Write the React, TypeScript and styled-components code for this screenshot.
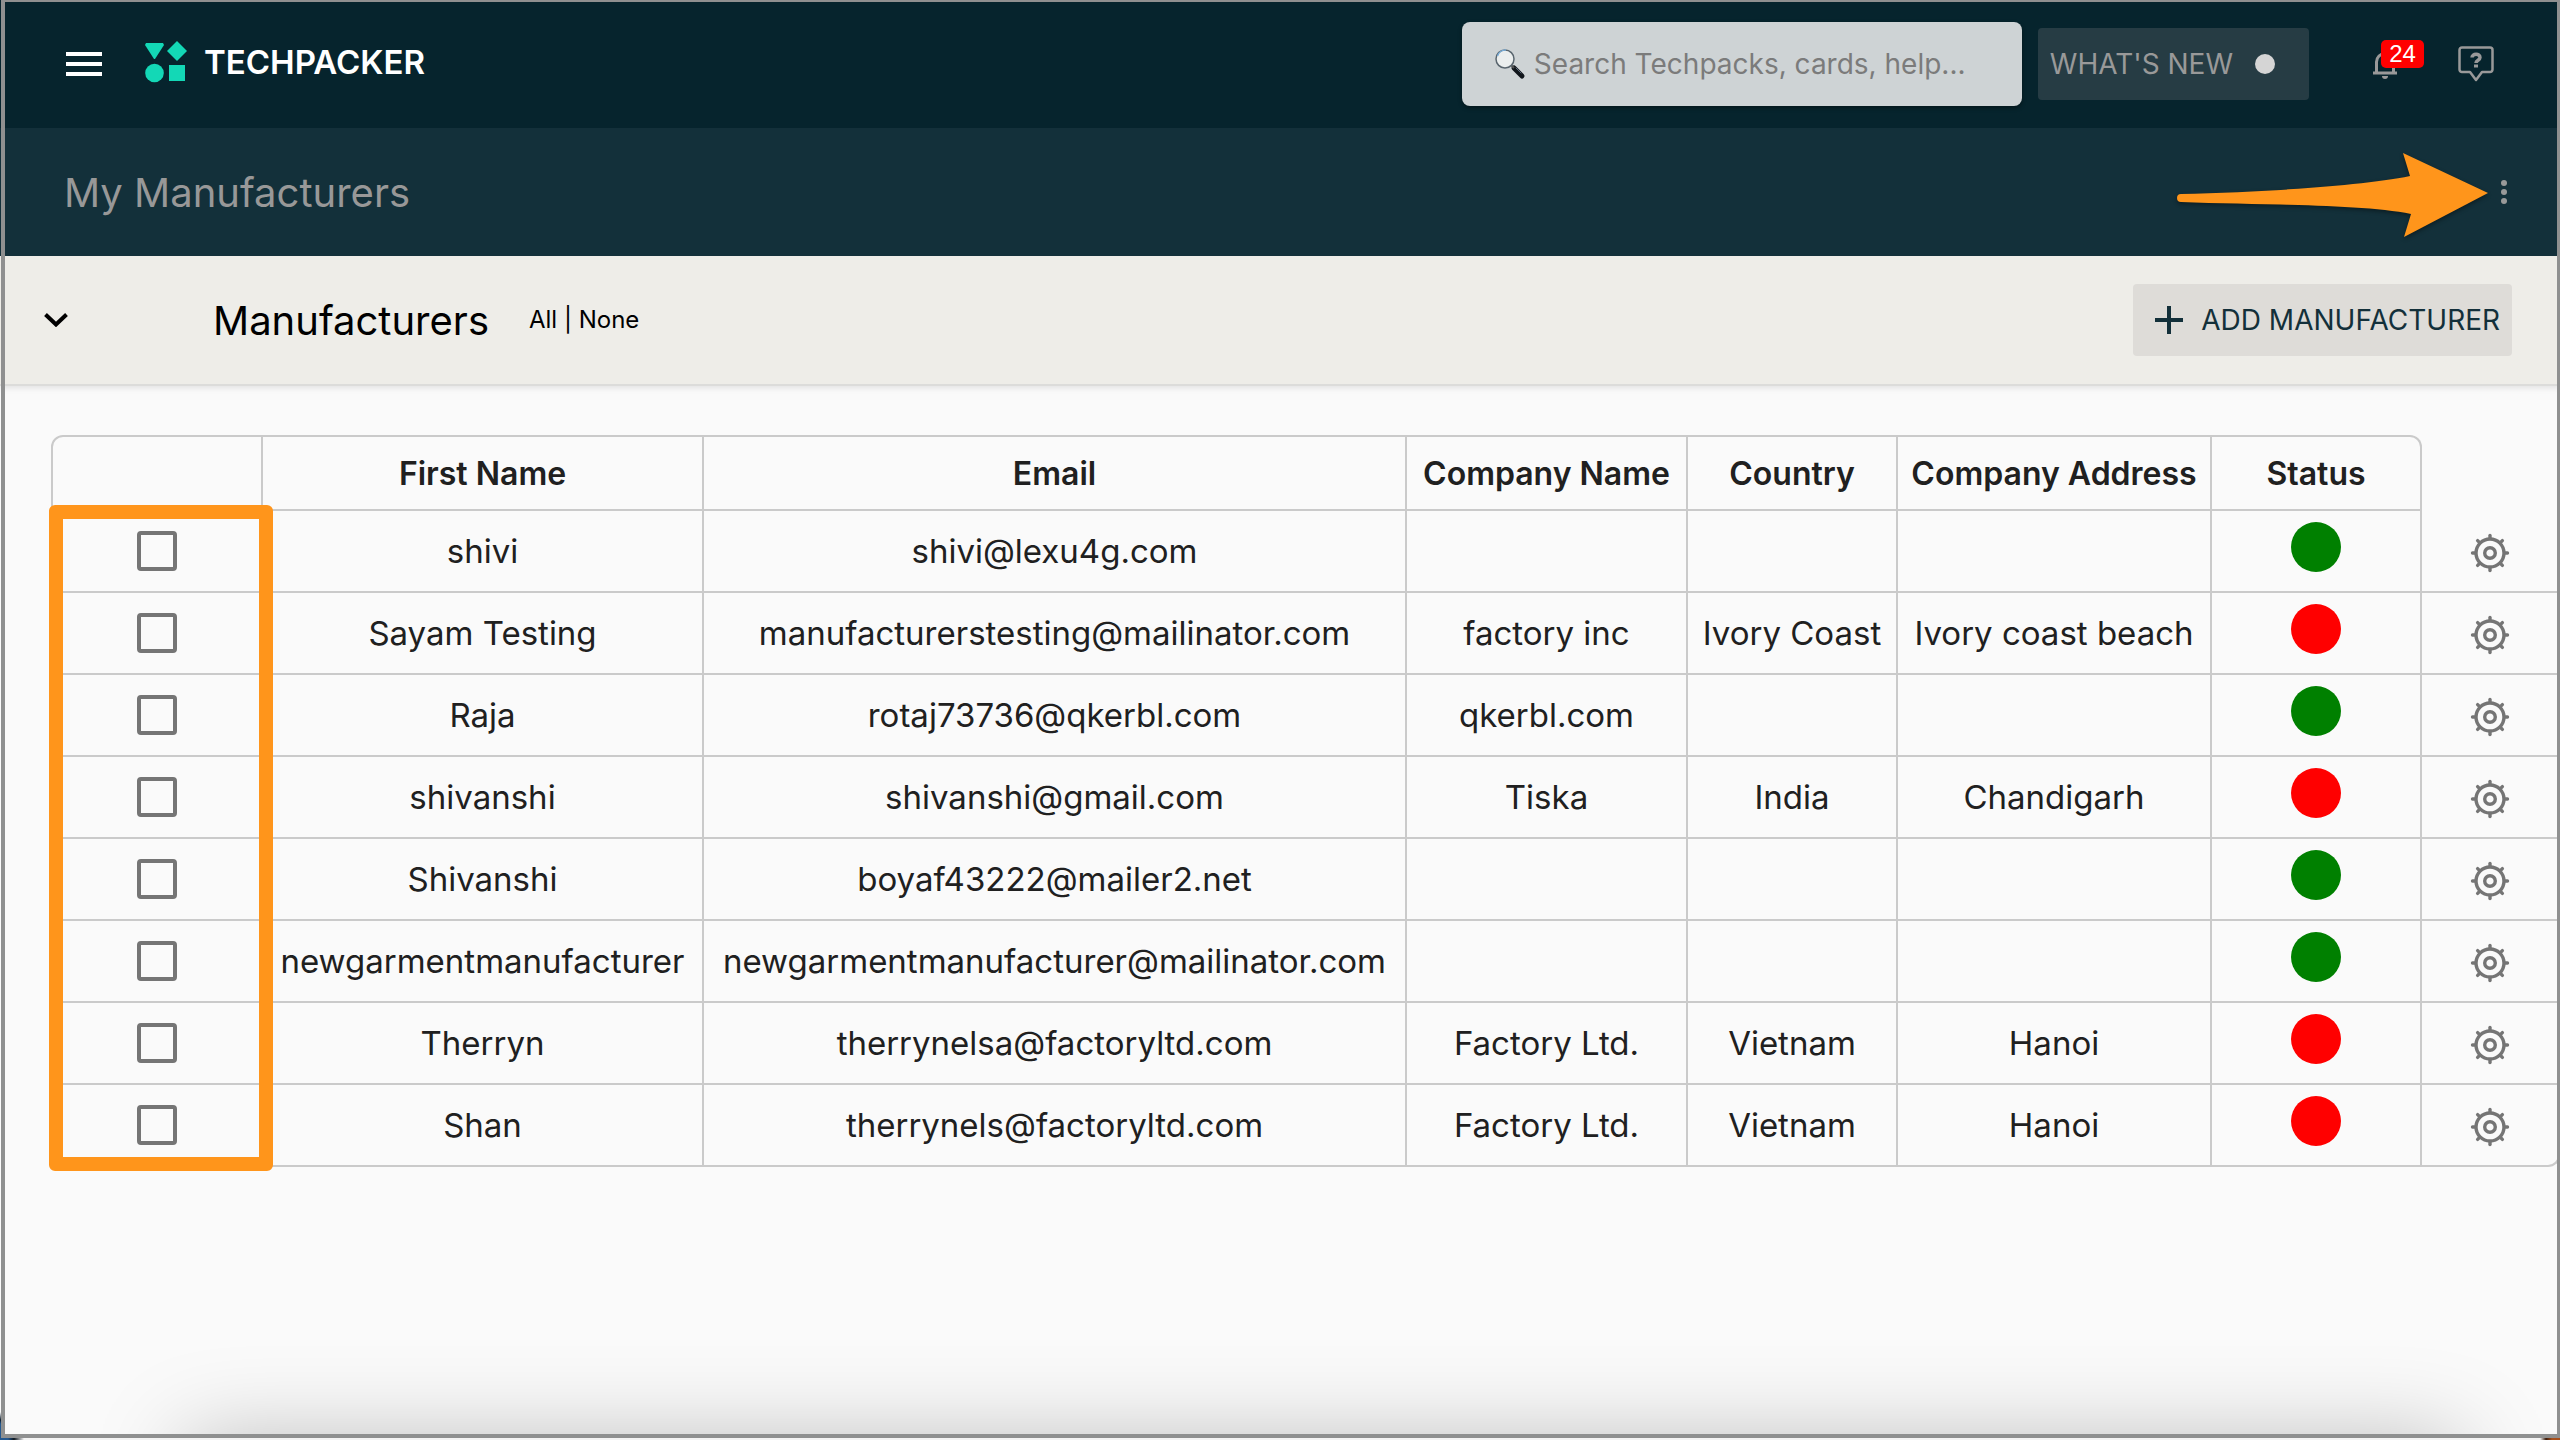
import React from "react";
import styled, { createGlobalStyle } from "styled-components";

const GlobalStyle = createGlobalStyle`
  *, *::before, *::after { box-sizing: border-box; }
  body {
    margin: 0;
    background: #fafafa;
    color: #202020;
    font-family: Inter, "Open Sans", "Liberation Sans", sans-serif;
  }
  button, input { font-family: inherit; }
`;

const Page = styled.div`
  position: relative;
  min-height: 100vh;
  overflow: clip;
  background: #fafafa;
`;

/* Window outline with a sliver of the desktop showing at the left and bottom edges. */
const WindowFrame = styled.div`
  position: absolute;
  inset: 0;
  pointer-events: none;
  z-index: 3;
  background:
    linear-gradient(to top, #24588f 16px, #0d1d2c 20px, transparent 28px) left / 1px 100% no-repeat,
    linear-gradient(to right, #24588f 8px, #101820 14px, #f4f4f4 24px, #f4f4f4 calc(100% - 20px), #3a1c0c calc(100% - 14px), #a8501c calc(100% - 8px)) bottom / 100% 2px no-repeat;

  &::after {
    content: "";
    position: absolute;
    inset: 0 0 2px 1px;
    border: 4px solid #8f9090;
    border-top-width: 2px;
    border-right-width: 3px;
  }
`;

const DockShadow = styled.div`
  position: absolute;
  left: 185px;
  right: 100px;
  bottom: -120px;
  height: 120px;
  box-shadow: 0 0 90px rgba(0, 0, 0, 0.25);
  pointer-events: none;
`;

const TopBar = styled.header`
  display: flex;
  align-items: center;
  height: 128px;
  padding: 0 64px;
  background: #06242d;
`;

const PlainButton = styled.button`
  display: flex;
  align-items: center;
  justify-content: center;
  padding: 0;
  border: 0;
  background: none;
  color: #999;
  cursor: pointer;
`;

const MenuButton = styled(PlainButton)`
  width: 40px;
  height: 40px;
  color: #fff;
`;

const Brand = styled.a`
  display: flex;
  align-items: center;
  gap: 17px;
  margin-left: 41px;
  padding-bottom: 4px;
  color: #fff;
  font-size: 33px;
  font-weight: 600;
  line-height: 40px;
  text-decoration: none;
`;

const Tools = styled.div`
  display: flex;
  align-items: center;
  margin-left: auto;
`;

const SearchBox = styled.label`
  display: flex;
  align-items: center;
  gap: 8px;
  width: 560px;
  height: 84px;
  padding: 0 32px;
  border-radius: 8px;
  background: #ced3d5;
  box-shadow: 0 2px 4px rgba(0, 0, 0, 0.4);
`;

const SearchInput = styled.input`
  flex: 1;
  min-width: 0;
  padding: 0;
  border: 0;
  outline: 0;
  background: transparent;
  color: #333;
  font-size: 28px;
  line-height: 40px;

  &::placeholder { color: #7b7b7b; opacity: 1; }
`;

const NewsButton = styled.button`
  display: flex;
  align-items: center;
  gap: 22px;
  height: 72px;
  margin-left: 16px;
  padding: 0 34px 0 12px;
  border: 0;
  border-radius: 4px;
  background: #263c44;
  color: #999;
  font-size: 28px;
  line-height: 40px;
  white-space: nowrap;
`;

const NewsDot = styled.span`
  width: 20px;
  height: 20px;
  border-radius: 50%;
  background: #d5d5d5;
`;

const BellButton = styled(PlainButton)`
  position: relative;
  width: 40px;
  height: 48px;
  margin-left: 56px;
`;

const Badge = styled.span`
  position: absolute;
  left: 16px;
  top: 0;
  width: 43px;
  height: 28px;
  border-radius: 5px;
  background: #f00;
  color: #fff;
  font: 24px/28px "Liberation Sans", sans-serif;
  text-align: center;
`;

const HelpButton = styled(PlainButton)`
  width: 40px;
  height: 48px;
  margin-left: 51px;
`;

const TitleBar = styled.div`
  position: relative;
  display: flex;
  align-items: center;
  justify-content: space-between;
  height: 128px;
  padding: 0 36px 0 64px;
  background: #13303a;
`;

const PageTitle = styled.h1`
  margin: 0;
  padding-top: 2px;
  color: #989898;
  font-size: 40px;
  font-weight: 400;
  line-height: 48px;
`;

const MoreButton = styled(PlainButton)`
  width: 40px;
  height: 40px;
`;

const Arrow = styled.svg`
  position: absolute;
  top: 20px;
  right: 68px;
  filter: drop-shadow(0 2px 2px rgba(0, 0, 0, 0.4));
`;

const SectionBar = styled.div`
  display: flex;
  align-items: center;
  height: 130px;
  padding: 0 48px 0 36px;
  border-bottom: 2px solid #dcdcda;
  background: #eeede8;
  box-shadow: 0 2px 6px rgba(0, 0, 0, 0.1);
  color: #000;
`;

const ToggleButton = styled(PlainButton)`
  width: 40px;
  height: 40px;
  color: #000;
`;

const SectionTitle = styled.h2`
  margin: 0 0 0 137px;
  padding-top: 2px;
  font-size: 40px;
  font-weight: 400;
  line-height: 48px;
`;

const SelectLinks = styled.div`
  margin-left: 40px;
  font-size: 24px;
  line-height: 32px;
  white-space: nowrap;
`;

const TextLink = styled.a`
  color: inherit;
  text-decoration: none;
`;

const AddButton = styled.button`
  display: flex;
  align-items: center;
  gap: 18px;
  height: 72px;
  margin-left: auto;
  padding: 0 12px 0 22px;
  border: 0;
  border-radius: 4px;
  background: #dedcd8;
  color: #13303a;
  font-size: 28px;
  line-height: 40px;
  white-space: nowrap;
`;

const TableArea = styled.main`
  position: relative;
  margin: 49px 0 0 51px;
`;

const Table = styled.table`
  width: 100%;
  table-layout: fixed;
  border-collapse: separate;
  border-spacing: 0;
`;

const HeadCell = styled.th`
  height: 76px;
  padding: 2px 0 0;
  border: solid #cacaca;
  border-width: 2px 2px 2px 0;
  font-size: 32px;
  font-weight: 600;
  line-height: 40px;
  white-space: nowrap;

  &:first-child {
    border-left-width: 2px;
    border-top-left-radius: 12px;
  }
  &:last-child { border-top-right-radius: 12px; }
`;

const Cell = styled.td`
  height: 82px;
  padding: 0;
  border: solid #cacaca;
  border-width: 0 2px 2px 0;
  font-size: 33px;
  line-height: 40px;
  text-align: center;
  white-space: nowrap;

  &:first-child { border-left-width: 2px; }
  tr:last-child > &:last-child { border-bottom-right-radius: 12px; }
`;

const CheckBox = styled.input`
  appearance: none;
  display: block;
  width: 40px;
  height: 40px;
  margin: 0 auto;
  border: 4px solid #757575;
  border-radius: 4px;

  &:checked { background: #757575; }
`;

const StatusDot = styled.span<{ $active: boolean }>`
  display: block;
  width: 50px;
  height: 50px;
  margin: 0 auto 8px;
  border-radius: 50%;
  background: ${(p) => (p.$active ? "#008000" : "#ff0000")};
`;

const GearButton = styled(PlainButton)`
  width: 44px;
  height: 44px;
  margin: 3px auto 0;
  color: #757575;
`;

const Highlight = styled.div`
  position: absolute;
  top: 70px;
  bottom: -4px;
  left: -2px;
  width: 224px;
  border: 14px solid #ff951b;
  border-radius: 6px;
  pointer-events: none;
`;

interface Manufacturer {
  name: string;
  email: string;
  company?: string;
  country?: string;
  address?: string;
  active: boolean;
}

const manufacturers: Manufacturer[] = [
  { name: "shivi", email: "shivi@lexu4g.com", active: true },
  { name: "Sayam Testing", email: "manufacturerstesting@mailinator.com", company: "factory inc", country: "Ivory Coast", address: "Ivory coast beach", active: false },
  { name: "Raja", email: "rotaj73736@qkerbl.com", company: "qkerbl.com", active: true },
  { name: "shivanshi", email: "shivanshi@gmail.com", company: "Tiska", country: "India", address: "Chandigarh", active: false },
  { name: "Shivanshi", email: "boyaf43222@mailer2.net", active: true },
  { name: "newgarmentmanufacturer", email: "newgarmentmanufacturer@mailinator.com", active: true },
  { name: "Therryn", email: "therrynelsa@factoryltd.com", company: "Factory Ltd.", country: "Vietnam", address: "Hanoi", active: false },
  { name: "Shan", email: "therrynels@factoryltd.com", company: "Factory Ltd.", country: "Vietnam", address: "Hanoi", active: false },
];

const columns = ["", "First Name", "Email", "Company Name", "Country", "Company Address", "Status"];
const columnWidths = [212, 441, 703, 281, 210, 314, 210, 138];

const Logo = () => (
  <svg width="42" height="42" viewBox="0 0 42 42" fill="#13d8b6" aria-hidden="true">
    <path d="M1 2h17l1 2-9 14-1 0L0 4z" />
    <path d="M32 0 42 10 32 20 22 10z" />
    <circle cx="9.5" cy="32" r="9.3" />
    <path d="M24 24h16v16H24z" />
  </svg>
);

const Magnifier = () => (
  <svg width="32" height="32" viewBox="0 0 32 32" aria-hidden="true">
    <path d="m20 20 8 8" stroke="#10151b" strokeWidth="5" strokeLinecap="round" />
    <path d="m17 17 3 3" stroke="#555" strokeWidth="2" />
    <circle cx="11" cy="11" r="9" fill="#ebeeee" stroke="#59656e" strokeWidth="1.5" />
    <path d="M3.5 8A8.5 8.5 0 0 1 12 2" fill="none" stroke="#79add8" strokeWidth="1.5" />
    <path d="m22 20 5 5" stroke="#5d6b7c" strokeWidth="1" strokeLinecap="round" />
  </svg>
);

const Gear = () => (
  <svg width="40" height="40" viewBox="-20 -20 40 40" fill="none" stroke="currentColor" aria-hidden="true">
    <circle r="14" strokeWidth="3.4" />
    <circle r="5.3" strokeWidth="3.4" />
    {[0, 45, 90, 135, 180, 225, 270, 315].map((a) => (
      <path key={a} d="M0-15v-2.5" strokeWidth="3.4" strokeLinecap="round" transform={`rotate(${a})`} />
    ))}
  </svg>
);

export default function App() {
  return (
    <Page>
      <GlobalStyle />
      <TopBar>
        <MenuButton aria-label="Menu">
          <svg width="36" height="24" viewBox="0 0 36 24" fill="currentColor">
            <path d="M0 0h36v4H0zM0 10h36v4H0zM0 20h36v4H0z" />
          </svg>
        </MenuButton>
        <Brand href="#">
          <Logo />
          TECHPACKER
        </Brand>
        <Tools>
          <SearchBox>
            <Magnifier />
            <SearchInput type="text" aria-label="Search" placeholder="Search Techpacks, cards, help..." />
          </SearchBox>
          <NewsButton>
            WHAT'S NEW
            <NewsDot />
          </NewsButton>
          <BellButton aria-label="Notifications">
            <svg width="26" height="32" viewBox="0 0 26 32" fill="none" stroke="currentColor" strokeWidth="3">
              <path d="M1 25h24M4.500 24V14a8.500 8.500 0 0 1 17 0v10" />
              <path d="M10 28h6a3 3 0 0 1-6 0z" fill="currentColor" stroke="none" />
            </svg>
            <Badge>24</Badge>
          </BellButton>
          <HelpButton aria-label="Help">
            <svg width="36" height="36" viewBox="0 0 36 36" fill="none" stroke="currentColor" strokeWidth="2.5" strokeLinejoin="round">
              <path d="M4 1.500h28a2.500 2.500 0 0 1 2.500 2.500v19.500a2.500 2.500 0 0 1-2.500 2.500h-8l-6 8-6-8H4a2.500 2.500 0 0 1-2.500-2.500V4A2.500 2.500 0 0 1 4 1.500z" />
              <path d="M14 11.500c0-4 8-4.500 8 0 0 3-4 2.500-4 5.500" strokeWidth="3.5" />
              <path d="M16 18.500h4v3h-4z" fill="currentColor" stroke="none" />
            </svg>
          </HelpButton>
        </Tools>
      </TopBar>
      <TitleBar>
        <PageTitle>My Manufacturers</PageTitle>
        <MoreButton aria-label="More options">
          <svg width="6" height="24" viewBox="0 0 6 24" fill="currentColor">
            <circle cx="3" cy="3" r="3" />
            <circle cx="3" cy="12" r="3" />
            <circle cx="3" cy="21" r="3" />
          </svg>
        </MoreButton>
        <Arrow width="320" height="100" viewBox="0 0 320 100" fill="#ff951b" aria-hidden="true">
          <path d="M9 46C90 44 190 38 238 28L231 5 316 45 232 89 239 66C190 56 90 57 9 54a4 4 0 0 1 0-8z" />
        </Arrow>
      </TitleBar>
      <SectionBar>
        <ToggleButton aria-label="Collapse section">
          <svg width="24" height="14" viewBox="0 0 24 14" fill="none" stroke="currentColor" strokeWidth="4">
            <path d="m1.500 1.500 10.500 10 10.500-10" />
          </svg>
        </ToggleButton>
        <SectionTitle>Manufacturers</SectionTitle>
        <SelectLinks>
          <TextLink href="#all">All</TextLink> | <TextLink href="#none">None</TextLink>
        </SelectLinks>
        <AddButton>
          <svg width="28" height="28" viewBox="0 0 28 28" fill="currentColor" aria-hidden="true">
            <path d="M12 0h4v12h12v4H16v12h-4V16H0v-4h12z" />
          </svg>
          ADD MANUFACTURER
        </AddButton>
      </SectionBar>
      <TableArea>
        <Table>
          <colgroup>
            {columnWidths.map((w, i) => (
              <col key={i} style={{ width: w }} />
            ))}
          </colgroup>
          <thead>
            <tr>
              {columns.map((c) => (
                <HeadCell key={c}>{c}</HeadCell>
              ))}
            </tr>
          </thead>
          <tbody>
            {manufacturers.map((m) => (
              <tr key={m.email}>
                <Cell>
                  <CheckBox type="checkbox" aria-label={`Select ${m.name}`} />
                </Cell>
                <Cell>{m.name}</Cell>
                <Cell>{m.email}</Cell>
                <Cell>{m.company}</Cell>
                <Cell>{m.country}</Cell>
                <Cell>{m.address}</Cell>
                <Cell>
                  <StatusDot $active={m.active} />
                </Cell>
                <Cell>
                  <GearButton aria-label={`Settings for ${m.name}`}>
                    <Gear />
                  </GearButton>
                </Cell>
              </tr>
            ))}
          </tbody>
        </Table>
        <Highlight />
      </TableArea>
      <DockShadow />
      <WindowFrame />
    </Page>
  );
}
